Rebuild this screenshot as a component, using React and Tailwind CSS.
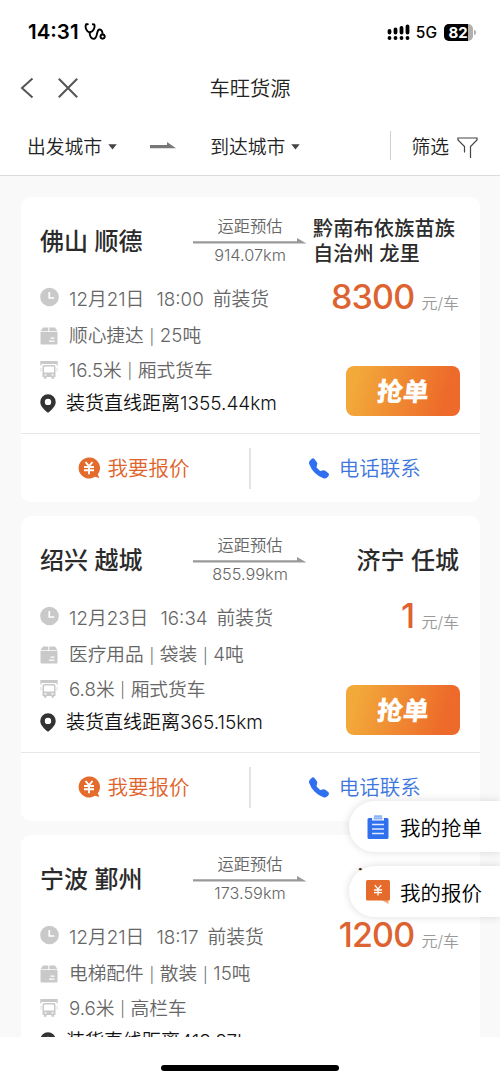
import { BsFillTelephoneFill } from 'react-icons/bs'

const orders = [
  {
    id: 1,
    from: '佛山 顺德',
    to: '黔南布依族苗族自治州 龙里',
    distance: '914.07km',
    date: '12月21日',
    time: '18:00',
    cargo: ['顺心捷达', '25吨'],
    truck: ['16.5米', '厢式货车'],
    away: '1355.44km',
    price: '8300',
    canGrab: true,
  },
  {
    id: 2,
    from: '绍兴 越城',
    to: '济宁 任城',
    distance: '855.99km',
    date: '12月23日',
    time: '16:34',
    cargo: ['医疗用品', '袋装', '4吨'],
    truck: ['6.8米', '厢式货车'],
    away: '365.15km',
    price: '1',
    canGrab: true,
  },
  {
    id: 3,
    from: '宁波 鄞州',
    to: '济南 历城',
    distance: '173.59km',
    date: '12月21日',
    time: '18:17',
    cargo: ['电梯配件', '散装', '15吨'],
    truck: ['9.6米', '高栏车'],
    away: '418.97km',
    price: '1200',
    canGrab: false,
  },
]

function ClockIcon() {
  return (
    <svg viewBox="0 0 20 20" className="w-5 h-5 shrink-0">
      <circle cx="9.500" cy="10" r="9.300" fill="#c9c9c9" />
      <path d="M9.300 5v6h5" fill="none" stroke="#fff" strokeWidth="1.700" />
    </svg>
  )
}

function BoxIcon() {
  return (
    <svg viewBox="0 0 18 18" className="w-[18px] h-[18px] shrink-0">
      <path d="M3 .5h5.300v3.700H.5zM9.300.5H15l2.500 3.700H9.300z" fill="#c9c9c9" />
      <path d="M.5 5h17v11.500a1 1 0 0 1-1 1h-15a1 1 0 0 1-1-1z" fill="#c9c9c9" />
      <path d="M10.500 11.200h4M9 14.200h5.500" stroke="#fff" strokeWidth="1.300" />
    </svg>
  )
}

function TruckIcon() {
  return (
    <svg viewBox="0 0 18 20" className="w-[18px] h-5 shrink-0">
      <path d="M.3 1h17.400v4.500h-1.200V4h-15v1.500H.3z" fill="#c9c9c9" />
      <path
        fillRule="evenodd"
        d="M4.500 5h9a2 2 0 0 1 2 2v10H14v1.800h-2.500V17h-5v1.800H4V17H2.500V7a2 2 0 0 1 2-2zM5 6.400a1 1 0 0 0-1 1v5.200h10V7.400a1 1 0 0 0-1-1zM4.500 14.200v1.200h2v-1.200zM11.500 14.200v1.200h2v-1.200z"
        fill="#c9c9c9"
      />
      <path d="M1 8v3.500M17 8v3.500" stroke="#dcdcdc" strokeWidth="1" />
    </svg>
  )
}

function PinIcon() {
  return (
    <svg viewBox="0 0 16 19" className="w-4 h-[19px] shrink-0">
      <path
        fillRule="evenodd"
        d="M8 .3a7.700 7.700 0 0 1 7.700 7.800c0 4.200-3.700 7.300-6.600 10a1.600 1.600 0 0 1-2.200 0C4 15.400.3 12.300.3 8.100A7.700 7.700 0 0 1 8 .3zM8 4.700a3.200 3.200 0 1 0 0 6.400 3.200 3.200 0 0 0 0-6.400z"
        fill="#333"
      />
    </svg>
  )
}

function QuoteIcon() {
  return (
    <svg viewBox="0 0 22 22" className="w-[22px] h-[22px] shrink-0">
      <path d="M11 .5a10.500 10.500 0 1 0 6 19.200l4.400 1.300-1.600-3.700A10.500 10.500 0 0 0 11 .5z" fill="#e46b2c" />
      <path d="M7.500 5l3.500 4.200L14.500 5M6 10h10M6 13.300h10M11 9.200v8" fill="none" stroke="#fff" strokeWidth="1.900" />
    </svg>
  )
}

function RouteArrow() {
  return (
    <svg viewBox="0 0 114 6" className="w-[114px] h-1.5">
      <path d="M0 3.200h104V0L113.500 5.400H0z" fill="#999" />
    </svg>
  )
}

function Specs({ items }) {
  return items.map((item, i) => (
    <span key={item} className="flex items-center">
      {i > 0 && <span className="mx-[7.300px] w-[1.500px] text-[15px] leading-[17px] flex justify-center">|</span>}
      {item}
    </span>
  ))
}

function OrderCard({ order }) {
  return (
    <div className="h-[305px] shrink-0 bg-white rounded-[10px] flex flex-col">
      <div className="h-[237px] border-b-[1.500px] border-[#e6e6e6] pl-[19px] pr-[21px]">
        {/* Route */}
        <div className="h-[85px] pt-1 flex items-center">
          <div className="w-[153px] text-[24px] font-medium text-[#2b2b2b]">{order.from}</div>
          <div className="w-[114px] pb-1 flex flex-col items-center text-[16.300px] leading-6 font-[350] text-[#666]">
            <span>运距预估</span>
            <RouteArrow />
            <span className="leading-[22px]">{order.distance}</span>
          </div>
          {order.to.length > 6 ? (
            <div className="ml-[6px] flex-1 whitespace-nowrap text-[20.300px] leading-[24.500px] font-medium text-[#2b2b2b]">
              {order.to.slice(0, 7)}
              <br />
              {order.to.slice(7)}
            </div>
          ) : (
            <div className="flex-1 text-right text-[24px] font-medium text-[#2b2b2b]">{order.to}</div>
          )}
        </div>

        <div className="flex justify-between">
          <div className="flex flex-col whitespace-nowrap text-[18.700px] font-[350] text-[#666]">
            <div className="h-9 flex items-center text-[18.800px]">
              <div className="w-[29px] pb-[7px]">
                <ClockIcon />
              </div>
              <span>{order.date}</span>
              <span className="ml-[12px]">{order.time}</span>
              <span className="ml-[9px]">前装货</span>
            </div>
            <div className="h-[37px] flex items-center">
              <div className="w-[29px] pb-0.5">
                <BoxIcon />
              </div>
              <Specs items={order.cargo} />
            </div>
            <div className="h-[32px] flex items-center">
              <div className="w-[29px] pb-0.5">
                <TruckIcon />
              </div>
              <Specs items={order.truck} />
            </div>
            <div className="h-[34px] flex items-center text-[19px] text-[#111]">
              <div className="w-[26px] pb-0.5">
                <PinIcon />
              </div>
              <span>装货直线距离{order.away}</span>
            </div>
          </div>

          <div className="flex flex-col items-end">
            <div className="h-[84px] flex items-baseline gap-[7px]">
              <span className="text-[34px] leading-[30px] tracking-[-0.800px] font-[480] text-[#dd6330]">{order.price}</span>
              <span className="text-[16px] font-[350] text-[#999]">元/车</span>
            </div>
            {order.canGrab && (
              <button className="-mr-px w-[114px] h-[50px] rounded-[8px] bg-linear-[105deg] from-[#f2a93a] from-10% to-[#ed6a2a] to-85% text-white text-[26px] leading-none font-black">
                <span className="inline-block pt-px -skew-x-6">抢单</span>
              </button>
            )}
          </div>
        </div>
      </div>

      {/* Actions */}
      <div className="flex-1 flex items-center text-[20.500px] font-[350]">
        <button className="w-[228px] pr-[3px] flex items-center justify-center gap-2 text-[#e0632b]">
          <QuoteIcon />
          <span className="pt-[3px]">我要报价</span>
        </button>
        <div className="w-[1.500px] h-[41px] bg-[#e4e4e4]" />
        <button className="flex-1 pr-px flex items-center justify-center gap-2.5 text-[#3d76dd]">
          <BsFillTelephoneFill className="w-[20px] h-[21px] text-[#3070f0]" />
          <span className="pt-[3px]">电话联系</span>
        </button>
      </div>
    </div>
  )
}

function StatusBar() {
  return (
    <div className="h-[60px] pl-7 pr-6 pt-1 flex items-center justify-between text-black">
      <div className="flex items-center gap-[5px]">
        <span className="text-[20.500px] font-semibold">14:31</span>
        <svg viewBox="0 0 22 18" className="w-[22px] h-[18px]" fill="none" stroke="#000" strokeWidth="1.900" strokeLinecap="round">
          <path d="M3.800 1.300H2.200C.6 4 2.500 8.800 5.700 9.500 9 9 11.500 4.500 10.200 1.500L8.800 1.200" />
          <path d="M5.700 9.500C5.500 13.500 7.500 16.200 10 15.800c4-.6 2-8.300 5.200-9.300 2.300-.5 3.300 2 3.400 4.800" />
          <circle cx="18.600" cy="13.600" r="2.100" />
        </svg>
      </div>
      <div className="flex items-center">
        <svg viewBox="0 0 23 17" className="w-[23px] h-[17px]">
          <path
            d="M2.500 7v1.500M8.500 5.500v3M14.500 4v4.500M20.500 2.500v6M2.500 14h.01M8.500 14h.01M14.500 14h.01M20.500 14h.01"
            stroke="#000"
            strokeWidth="3.800"
            strokeLinecap="round"
          />
        </svg>
        <span className="ml-1.5 pt-px text-[15.500px] font-medium">5G</span>
        <div className="ml-[7px] w-[29px] h-[17px] rounded-[5px] overflow-hidden bg-[#b0b0b0] flex">
          <div className="w-6 bg-black text-white text-[15px] leading-[17px] font-bold text-center pl-1">82</div>
        </div>
        <div className="ml-px w-[2px] h-[5px] rounded-r-full bg-[#b0b0b0]" />
      </div>
    </div>
  )
}

export default function App() {
  return (
    <div className="relative w-[500px] h-[1081px] overflow-hidden bg-white flex flex-col font-['Inter','Noto_Sans_CJK_SC',sans-serif]">
      <StatusBar />

      {/* Nav bar */}
      <div className="h-14 px-5 grid grid-cols-[1fr_auto_1fr] items-center">
        <div className="flex items-center gap-6">
          <svg viewBox="0 0 14 22" className="w-3.5 h-[22px]">
            <path d="M12.500 1.500L2 11l10.500 9.500" fill="none" stroke="#555" strokeWidth="2" />
          </svg>
          <svg viewBox="0 0 20 20" className="w-5 h-5">
            <path d="M.8.8l18.400 18.400M19.200.8L.8 19.200" stroke="#555" strokeWidth="2" />
          </svg>
        </div>
        <h1 className="pt-[3px] text-[20.300px] font-[350] text-[#222]">车旺货源</h1>
      </div>

      {/* Filters */}
      <div className="h-[60px] pl-[27px] pr-[22px] border-b border-[#dcdcdc] flex items-center text-[18.800px] font-[350] text-[#222]">
        <span className="pt-[5px]">出发城市</span>
        <svg viewBox="0 0 9 6" className="ml-1.5 mt-0.5 w-[9px] h-1.5">
          <path d="M.3.300h8.400L4.500 5.500z" fill="#444" />
        </svg>
        <svg viewBox="0 0 26 7" className="ml-[33px] w-[26px] h-[7px]">
          <path d="M0 3h17V0l9 6.300H0z" fill="#777" />
        </svg>
        <span className="ml-[34px] pt-[5px]">到达城市</span>
        <svg viewBox="0 0 9 6" className="ml-1.5 mt-0.5 w-[9px] h-1.5">
          <path d="M.3.300h8.400L4.500 5.500z" fill="#444" />
        </svg>
        <div className="ml-auto w-px h-[29px] bg-[#d0d0d0]" />
        <span className="ml-5 pt-[5px]">筛选</span>
        <svg viewBox="0 0 21 21" className="ml-2 mt-1 w-[21px] h-[21px]">
          <path d="M7.500 15.500V9.500L1 3V1h19v2l-6.500 6.500V21" fill="none" stroke="#444" strokeWidth="1.200" />
        </svg>
      </div>

      {/* Orders */}
      <div className="h-[861px] overflow-hidden bg-[#f9f9f9] pt-[21px] pl-[21px] pr-5 flex flex-col gap-3.5">
        {orders.map((order) => (
          <OrderCard key={order.id} order={order} />
        ))}
      </div>

      {/* Home indicator */}
      <div className="flex-1 flex justify-center items-center pt-[17px]">
        <div className="w-[178px] h-1.5 rounded-full bg-black" />
      </div>

      {/* Floating shortcuts */}
      <div className="absolute right-0 top-[801px] flex flex-col gap-3.5 text-[20.500px] text-black">
        <button className="w-[151px] h-[51px] pl-[18px] flex items-center rounded-l-full bg-white shadow-[0_0_8px_rgba(0,0,0,0.14)]">
          <svg viewBox="0 0 22 24" className="w-[22px] h-6">
            <path d="M2 3h3v2.500h12V3h3a1.500 1.500 0 0 1 1.500 1.500v18A1.500 1.500 0 0 1 20 24H2a1.500 1.500 0 0 1-1.500-1.500v-18A1.500 1.500 0 0 1 2 3z" fill="#3070ee" />
            <path d="M7 1.200h8M6.500 3.500h9" stroke="#8fb2f7" strokeWidth="2" />
            <path d="M5 9.500h12M5 14h12M5 18.500h12" stroke="#dfe9ff" strokeWidth="1.500" />
          </svg>
          <span className="ml-[11px] pt-[5px] font-[350]">我的抢单</span>
        </button>
        <button className="w-[151px] h-[51px] pl-[17px] flex items-center rounded-l-full bg-white shadow-[0_0_8px_rgba(0,0,0,0.14)]">
          <svg viewBox="0 0 24 24" className="w-6 h-6">
            <path d="M12 18h10.500v6z" fill="#f3a878" />
            <rect width="24" height="20.500" rx="1.500" fill="#e46b2c" />
            <path d="M8.800 5.200l3.200 4 3.200-4M8 10h8M8 12.700h8M12 9v6.500" fill="none" stroke="#fff" strokeWidth="1.300" />
          </svg>
          <span className="ml-2.5 pt-[5px] font-[350]">我的报价</span>
        </button>
      </div>
    </div>
  )
}
